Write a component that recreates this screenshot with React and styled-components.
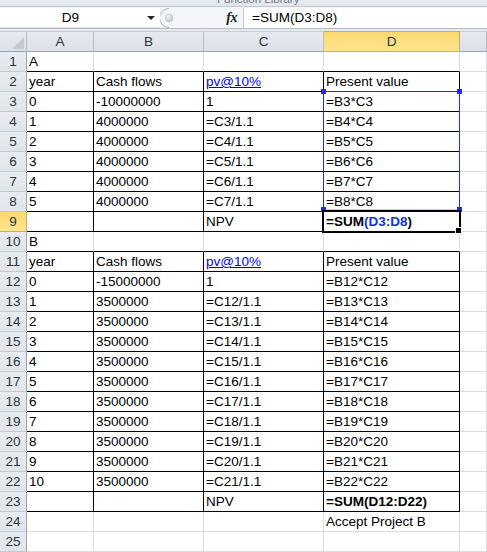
import React from "react";
import styled, { createGlobalStyle } from "styled-components";

const GlobalStyle = createGlobalStyle`
  html, body {
    margin: 0;
    padding: 0;
    background: #ffffff;
  }
  body {
    font-family: "Liberation Sans", Arial, sans-serif;
    font-size: 13.5px;
    color: #000;
    overflow: hidden;
  }
`;

const Window = styled.div`
  width: 487px;
  height: 552px;
  overflow: hidden;
  display: flex;
  flex-direction: column;
`;

const RibbonEdge = styled.div`
  height: 11px;
  box-sizing: border-box;
  border-bottom: 1px solid #c3c9d2;
  background: linear-gradient(#e9edf2, #dfe4ea);
  overflow: hidden;
  display: flex;
  padding-left: 217px;
`;

const GroupLabel = styled.span`
  font-size: 11.5px;
  line-height: 12px;
  color: #6f7886;
  transform: translateY(-7px);
  white-space: nowrap;
`;

const FormulaBar = styled.div`
  height: 22px;
  box-sizing: border-box;
  display: flex;
  align-items: stretch;
  padding-top: 1px;
  background: #f3f5f7;
  border-bottom: 1px solid #b6bdc7;
`;

const NameBox = styled.div`
  width: 160px;
  background: #fff;
  display: flex;
  align-items: center;
  border-bottom: 1px solid #dfe3e8;
`;

const NameText = styled.span`
  width: 141px;
  text-align: center;
  line-height: 20px;
`;

const DropArrow = styled.span`
  width: 0;
  height: 0;
  border-left: 4px solid transparent;
  border-right: 4px solid transparent;
  border-top: 4px solid #222;
  margin-left: 6px;
`;

const Splitter = styled.svg`
  width: 16px;
  height: 20px;
  flex-shrink: 0;
`;

const FxArea = styled.div`
  flex: 0 0 68px;
  display: flex;
  align-items: center;
  justify-content: flex-end;
  padding-right: 6px;
  box-sizing: border-box;
  border-right: 1px solid #c7ccd4;
`;

const Fx = styled.span`
  font-family: "Liberation Serif", "Times New Roman", serif;
  font-style: italic;
  font-weight: bold;
  font-size: 14px;
  color: #222;
  letter-spacing: -0.5px;
`;

const FormulaInput = styled.div`
  flex: 1;
  background: #fff;
  padding-left: 8px;
  line-height: 20px;
  white-space: nowrap;
`;

const Gap = styled.div`
  height: 3px;
  background: #e6e9ed;
`;

const Sheet = styled.div`
  position: relative;
  display: grid;
  grid-template-columns: 27px 67px 110px 120px 136px 1fr;
  grid-template-rows: 21px repeat(25, 20px);
`;

const ColHead = styled.div`
  box-sizing: border-box;
  border-right: 1px solid ${(p) => (p.$sel ? "#e2a642" : "#b7bec8")};
  border-bottom: 1px solid ${(p) => (p.$sel ? "#e2a642" : "#9aa3b0")};
  border-top: 1px solid ${(p) => (p.$sel ? "#e2a642" : "#c9ced6")};
  background: ${(p) =>
    p.$sel
      ? "linear-gradient(#fbd870, #fde58e)"
      : "linear-gradient(#e6e9ee, #dde1e7)"};
  color: #2f3440;
  text-align: center;
  line-height: 19px;
  position: relative;
`;

const Corner = styled(ColHead)`
  &::after {
    content: "";
    position: absolute;
    right: 2px;
    bottom: 2px;
    width: 0;
    height: 0;
    border-left: 12px solid transparent;
    border-bottom: 12px solid #c4c9d0;
  }
`;

const RowHead = styled.div`
  box-sizing: border-box;
  border-right: 1px solid ${(p) => (p.$sel ? "#e2a642" : "#9aa3b0")};
  border-bottom: 1px solid ${(p) => (p.$sel ? "#e2a642" : "#c3c9d1")};
  background: ${(p) =>
    p.$sel
      ? "linear-gradient(#fbd870, #fde58e)"
      : "linear-gradient(#e8ebef, #e1e5ea)"};
  color: #2f3440;
  text-align: center;
  line-height: 19px;
`;

const Cell = styled.div`
  box-sizing: border-box;
  border-right: 1px solid ${(p) => (p.$rb ? "#000" : "#d9dbdd")};
  border-bottom: 1px solid ${(p) => (p.$bb ? "#000" : "#d9dbdd")};
  padding-left: 2px;
  line-height: 19px;
  white-space: nowrap;
  font-weight: ${(p) => (p.$bold ? "bold" : "normal")};
`;

const Link = styled.span`
  color: #0000ff;
  text-decoration: underline;
`;

const Ref = styled.span`
  color: #1133dd;
`;

const RangeBox = styled.div`
  position: absolute;
  left: 323px;
  top: 60px;
  width: 137px;
  height: 119px;
  box-sizing: border-box;
  border: 1px solid #1a2cf0;
  border-bottom-color: #e8dc2a;
  pointer-events: none;
`;

const Handle = styled.div`
  position: absolute;
  width: 5px;
  height: 5px;
  background: #1a2cf0;
  left: ${(p) => p.$x}px;
  top: ${(p) => p.$y}px;
`;

const Selection = styled.div`
  position: absolute;
  left: 322px;
  top: 179px;
  width: 139px;
  height: 23px;
  box-sizing: border-box;
  border: 2px solid #000;
  pointer-events: none;
`;

const FillHandle = styled.div`
  position: absolute;
  left: 456px;
  top: 197px;
  width: 5px;
  height: 5px;
  background: #000;
  outline: 1px solid #fff;
`;

const pv = { link: "pv@10%" };
const sumA = { sumA: true };

const rows = [
  ["A", "", "", ""],
  ["year", "Cash flows", pv, "Present value"],
  ["0", "-10000000", "1", "=B3*C3"],
  ["1", "4000000", "=C3/1.1", "=B4*C4"],
  ["2", "4000000", "=C4/1.1", "=B5*C5"],
  ["3", "4000000", "=C5/1.1", "=B6*C6"],
  ["4", "4000000", "=C6/1.1", "=B7*C7"],
  ["5", "4000000", "=C7/1.1", "=B8*C8"],
  ["", "", "NPV", sumA],
  ["B", "", "", ""],
  ["year", "Cash flows", pv, "Present value"],
  ["0", "-15000000", "1", "=B12*C12"],
  ...Array.from({ length: 10 }, (_, i) => [
    String(i + 1),
    "3500000",
    `=C${12 + i}/1.1`,
    `=B${13 + i}*C${13 + i}`,
  ]),
  ["", "", "NPV", { bold: "=SUM(D12:D22)" }],
  ["", "", "", "Accept Project B"],
  ["", "", "", ""],
];

const tableRows = new Set([2, 3, 4, 5, 6, 7, 8, 9, 11, 12, 13, 14, 15, 16, 17, 18, 19, 20, 21, 22, 23]);
const aboveTable = new Set([1, 10]);

function renderValue(v) {
  if (typeof v === "string") return v;
  if (v.link) return <Link>{v.link}</Link>;
  if (v.sumA)
    return (
      <>
        =SUM<Ref>(D3:D8</Ref>)
      </>
    );
  return v.bold;
}

export default function App() {
  return (
    <Window>
      <GlobalStyle />
      <RibbonEdge>
        <GroupLabel>Function Library</GroupLabel>
      </RibbonEdge>
      <FormulaBar>
        <NameBox>
          <NameText>D9</NameText>
          <DropArrow />
        </NameBox>
        <Splitter viewBox="0 0 16 20">
          <defs>
            <radialGradient id="knob" cx="0.4" cy="0.35" r="0.7">
              <stop offset="0" stopColor="#f4f5f7" />
              <stop offset="1" stopColor="#b9bec6" />
            </radialGradient>
          </defs>
          <path d="M9 0.5 A 9.5 9.5 0 0 0 9 19.5" fill="#f5f6f8" stroke="#aab1bb" />
          <circle cx="9" cy="10" r="4" fill="url(#knob)" stroke="#c2c7ce" strokeWidth="0.6" />
        </Splitter>
        <FxArea>
          <Fx>fx</Fx>
        </FxArea>
        <FormulaInput>=SUM(D3:D8)</FormulaInput>
      </FormulaBar>
      <Gap />
      <Sheet>
        <Corner />
        {["A", "B", "C", "D", ""].map((c, k) => (
          <ColHead key={k} $sel={c === "D"}>
            {c}
          </ColHead>
        ))}
        {rows.map((r, i) => {
          const n = i + 1;
          const inTable = tableRows.has(n);
          const bb = inTable || aboveTable.has(n);
          return (
            <React.Fragment key={n}>
              <RowHead $sel={n === 9}>{n}</RowHead>
              {r.map((v, j) => (
                <Cell
                  key={j}
                  $rb={inTable}
                  $bb={bb}
                  $bold={typeof v === "object" && (v.sumA || v.bold)}
                >
                  {renderValue(v)}
                </Cell>
              ))}
              <Cell />
            </React.Fragment>
          );
        })}
        <RangeBox />
        <Handle $x={321} $y={58} />
        <Handle $x={457} $y={58} />
        <Handle $x={321} $y={176} />
        <Handle $x={457} $y={176} />
        <Selection />
        <FillHandle />
      </Sheet>
    </Window>
  );
}
